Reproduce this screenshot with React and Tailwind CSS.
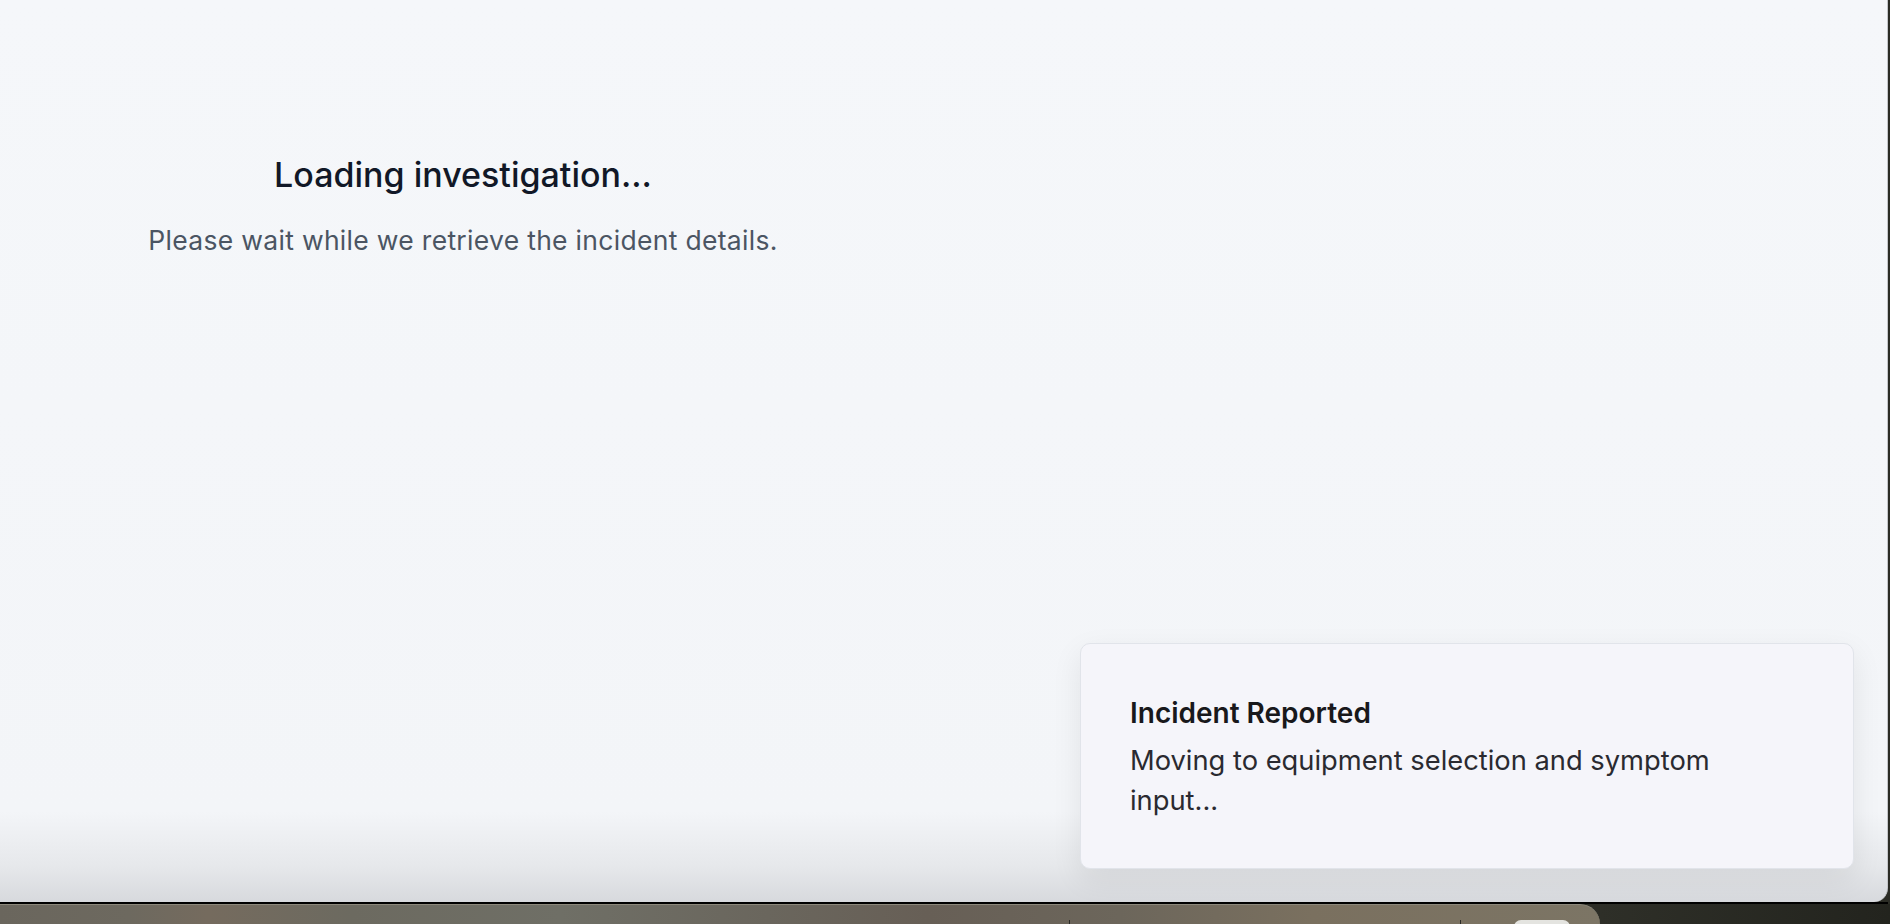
export default function App() {
  return (
    <div className="w-[1890px] h-[924px] overflow-hidden bg-[#2b2c25] flex flex-col font-['Inter','Noto_Sans',sans-serif]">
      {/* browser window */}
      <div className="relative w-[1888px] h-[902px] shrink-0 rounded-br-[14px] border-r border-[#c4c6ca] bg-[linear-gradient(to_bottom,#f5f7fa_0%,#f3f5f8_90%,#e6e8eb_96%,#d7d9dd_100%)]">
        <div className="w-[926px] pt-[155px] flex flex-col items-center text-center">
          <h1 className="text-[34px] leading-[40px] font-medium text-[#111827]">
            Loading investigation...
          </h1>
          <p className="mt-[29px] text-[26.5px] leading-[32px] tracking-[0.3px] text-[#4b5563]">
            Please wait while we retrieve the incident details.
          </p>
        </div>

        {/* toast */}
        <div className="absolute right-[33px] bottom-[33px] w-[774px] h-[226px] rounded-[10px] border border-[#e1e4ea] bg-[#f5f5fa] shadow-[0_10px_30px_rgba(0,0,0,0.08)] pl-[49px] pr-[80px] pt-[51px]">
          <p className="text-[28px] leading-[36px] font-semibold text-[#18181b]">Incident Reported</p>
          <p className="mt-[10px] text-[27.3px] leading-[40px] text-[#2a2a30]">
            Moving to equipment selection and symptom input...
          </p>
        </div>
      </div>

      <div className="h-[2px] w-[1888px] shrink-0 bg-black" />

      {/* desktop / dock peeking */}
      <div className="flex h-[20px] shrink-0">
        <div className="relative w-[1600px] rounded-tr-[30px] border-t border-[#8c887b] bg-[linear-gradient(to_right,#6a665d_0%,#6d695f_8%,#756b5e_13%,#6c6a60_22%,#6f6f66_35%,#6a665d_48%,#675f56_58%,#6c665b_70%,#7a705f_82%,#7c7565_100%)]">
          <div className="absolute left-[1069px] bottom-0 h-[4px] w-px bg-[#2a2a26]" />
          <div className="absolute left-[1460px] bottom-0 h-[4px] w-px bg-[#2a2a26]" />
          <div className="absolute left-[1514px] bottom-[-10px] h-[14px] w-[56px] rounded-full bg-[#e4e4e0]" />
        </div>
        <div className="flex-1 bg-[linear-gradient(to_right,#2e2f28,#23241e)]" />
      </div>
    </div>
  );
}
